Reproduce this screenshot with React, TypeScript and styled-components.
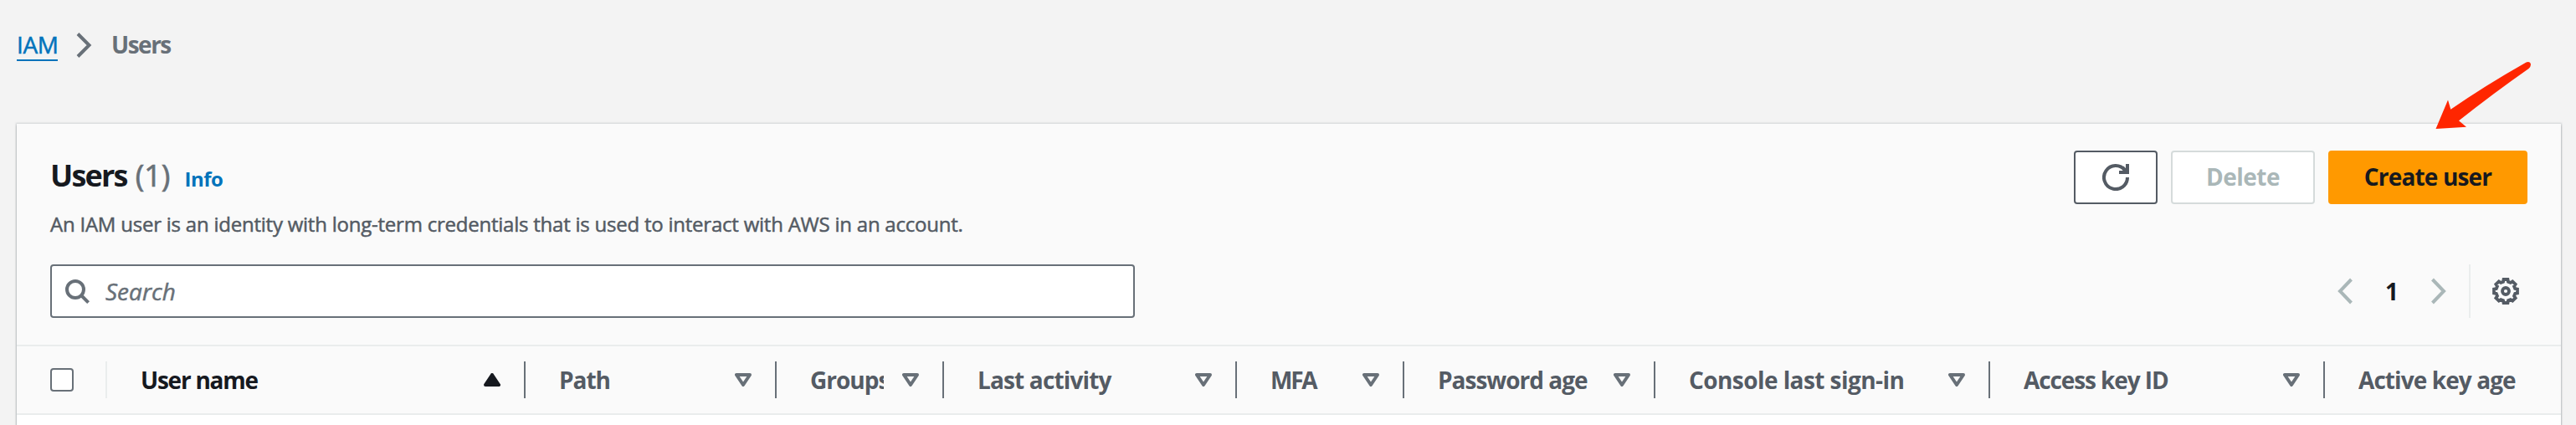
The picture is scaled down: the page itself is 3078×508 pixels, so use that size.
import React from "react";
import styled, { createGlobalStyle } from "styled-components";

const color = {
  page: "#f3f3f3",
  panel: "#fafafa",
  line: "#eaeded",
  ink: "#16191f",
  label: "#545b64",
  muted: "#687078",
  disabled: "#aab7b8",
  disabledLine: "#d5dbdb",
  link: "#0073bb",
  accent: "#ff9900",
};

const GlobalStyle = createGlobalStyle`
  *, *::before, *::after { box-sizing: border-box; }
  body {
    margin: 0;
    background: ${color.page};
    color: ${color.ink};
    font: 400 28px/36px "Open Sans", "Noto Sans", sans-serif;
    overflow: hidden;
  }
  button, input { font: inherit; color: inherit; margin: 0; }
`;

const Page = styled.div`
  position: relative;
  display: flex;
  flex-direction: column;
  height: 508px;
  padding: 0 18px 0 20px;
  overflow: hidden;
`;

const Breadcrumbs = styled.nav`
  display: flex;
  align-items: flex-start;
  flex: 0 0 148px;
  padding-top: 35px;
`;

const CrumbLink = styled.a`
  width: 49px;
  height: 38px;
  border-bottom: 2px solid ${color.link};
  color: ${color.link};
  letter-spacing: -0.4px;
  -webkit-text-stroke: 0.5px;
  white-space: nowrap;
`;

const CrumbSeparator = styled.svg`
  flex: none;
  width: 32px;
  height: 32px;
  margin: 3px 17px 0 15px;
`;

const CrumbCurrent = styled.span`
  color: ${color.muted};
  font-weight: 700;
  letter-spacing: -1.5px;
`;

const Panel = styled.section`
  display: flex;
  flex-direction: column;
  flex: 1;
  width: 3040px;
  background: #fff;
  box-shadow: 0 2px 2px 0 rgba(0, 28, 36, 0.3), 0 0 2px 1px rgba(0, 28, 36, 0.15);
`;

const PanelHeader = styled.header`
  display: flex;
  flex-direction: column;
  flex: none;
  height: 264px;
  padding: 32px 40px 0;
  background: ${color.panel};
`;

const TitleRow = styled.div`
  display: flex;
  justify-content: space-between;
  height: 136px;
`;

const TitleBlock = styled.div`
  padding-top: 8px;
`;

const Heading = styled.div`
  display: flex;
  align-items: baseline;
  height: 44px;
  line-height: 44px;
`;

const Title = styled.h1`
  margin: 0;
  font-size: 36px;
  font-weight: 700;
  letter-spacing: -1.8px;
`;

const Counter = styled.span`
  margin-left: 10px;
  color: ${color.muted};
  font-size: 36px;
  -webkit-text-stroke: 0.7px;
`;

const InfoLink = styled.a`
  margin-left: 17px;
  color: ${color.link};
  font-size: 24px;
  font-weight: 700;
  letter-spacing: -0.5px;
`;

const Description = styled.p`
  margin: 16px 0 0;
  color: ${color.label};
  font-size: 24px;
  line-height: 40px;
  letter-spacing: -0.23px;
  -webkit-text-stroke: 0.5px;
  white-space: nowrap;
`;

const Actions = styled.div`
  display: flex;
  gap: 16px;
`;

type Variant = "normal" | "disabled" | "primary";

const variants: Record<Variant, { fg: string; bg: string; line: string }> = {
  normal: { fg: color.label, bg: "#fff", line: color.label },
  disabled: { fg: color.disabled, bg: "#fff", line: color.disabledLine },
  primary: { fg: color.ink, bg: color.accent, line: color.accent },
};

const Button = styled.button<{ $variant: Variant; $width: number; $track?: number }>`
  display: flex;
  align-items: center;
  justify-content: center;
  width: ${(p) => p.$width}px;
  height: 64px;
  padding: 0 0 2px;
  border: 2px solid ${(p) => variants[p.$variant].line};
  border-radius: 4px;
  background: ${(p) => variants[p.$variant].bg};
  color: ${(p) => variants[p.$variant].fg};
  font-weight: 700;
  letter-spacing: ${(p) => p.$track ?? 0}px;
  white-space: nowrap;
`;

const ButtonIcon = styled.svg`
  width: 32px;
  height: 32px;
  margin-top: 2px;
`;

const Toolbar = styled.div`
  display: flex;
  justify-content: space-between;
  height: 64px;
`;

const SearchBox = styled.label`
  display: flex;
  align-items: center;
  width: 1296px;
  height: 64px;
  padding: 0 14px;
  border: 2px solid ${color.muted};
  border-radius: 4px;
  background: #fff;
`;

const SearchIcon = styled.svg`
  flex: none;
  width: 32px;
  height: 32px;
`;

const SearchInput = styled.input`
  flex: 1;
  height: 40px;
  padding: 0;
  margin-left: 18px;
  border: 0;
  outline: 0;
  background: transparent;
  &::placeholder {
    color: ${color.muted};
    font-style: italic;
    opacity: 1;
    -webkit-text-stroke: 0.5px;
  }
`;

const Pager = styled.div`
  display: flex;
  align-items: center;
  padding-right: 10px;
`;

const PagerIcon = styled.svg`
  width: 32px;
  height: 32px;
`;

const PageNumber = styled.span`
  width: 80px;
  padding-bottom: 1px;
  font-weight: 700;
  text-align: center;
`;

const PagerDivider = styled.span`
  width: 2px;
  height: 64px;
  margin: 0 26px 0 20px;
  background: ${color.line};
`;

const HeaderRow = styled.div`
  display: flex;
  flex: none;
  height: 84px;
  border-top: 2px solid ${color.line};
  border-bottom: 2px solid ${color.line};
  background: ${color.panel};
`;

const SelectCell = styled.div`
  display: flex;
  align-items: center;
  justify-content: space-between;
  width: 108px;
  padding-left: 40px;
`;

const Checkbox = styled.span`
  width: 28px;
  height: 28px;
  border: 2px solid ${color.muted};
  border-radius: 4px;
  background: #fff;
`;

const Cell = styled.div<{ $width: number }>`
  display: flex;
  align-items: center;
  flex: none;
  width: ${(p) => p.$width}px;
  padding-left: 40px;
`;

const CellLabel = styled.span<{ $active?: boolean; $track: number }>`
  flex: 1;
  min-width: 0;
  margin-right: 22px;
  padding-bottom: 1px;
  overflow: hidden;
  color: ${(p) => (p.$active ? color.ink : color.label)};
  font-weight: 700;
  letter-spacing: ${(p) => p.$track}px;
  white-space: nowrap;
`;

const SortIcon = styled.svg`
  flex: none;
  width: 20px;
  height: 16px;
  margin-right: 28px;
`;

const CellDivider = styled.span<{ $strong?: boolean }>`
  flex: none;
  width: 2px;
  height: 44px;
  background: ${(p) => (p.$strong ? color.muted : color.line)};
`;

const Pointer = styled.svg`
  position: absolute;
  left: 2900px;
  top: 66px;
  width: 132px;
  height: 96px;
`;

const columns = [
  { label: "User name", width: 500, track: -1.24, sorted: true },
  { label: "Path", width: 300, track: -1.05 },
  { label: "Groups", width: 200, track: -1 },
  { label: "Last activity", width: 350, track: -0.85 },
  { label: "MFA", width: 200, track: -2.2 },
  { label: "Password age", width: 300, track: -1.01 },
  { label: "Console last sign-in", width: 400, track: -0.57 },
  { label: "Access key ID", width: 400, track: -1.1 },
  { label: "Active key age", width: 282, track: -0.92, last: true },
];

// Outline of an eight-toothed cog centred in a 32px box.
const cogPath = (() => {
  const points: string[] = [];
  for (let tooth = 0; tooth < 8; tooth++) {
    for (const [offset, radius] of [[-15, 11.6], [-10, 14.2], [10, 14.2], [15, 11.6]]) {
      const a = ((tooth * 45 + offset) * Math.PI) / 180;
      points.push(`${(16 + radius * Math.cos(a)).toFixed(2)} ${(16 + radius * Math.sin(a)).toFixed(2)}`);
    }
  }
  return `M${points.join("L")}Z`;
})();

export default function App() {
  return (
    <Page>
      <GlobalStyle />
      <Breadcrumbs>
        <CrumbLink>IAM</CrumbLink>
        <CrumbSeparator viewBox="0 0 32 32" fill="none" stroke={color.muted} strokeWidth="4">
          <path d="M9 2.5 22.5 16 9 29.5" />
        </CrumbSeparator>
        <CrumbCurrent>Users</CrumbCurrent>
      </Breadcrumbs>

      <Panel>
        <PanelHeader>
          <TitleRow>
            <TitleBlock>
              <Heading>
                <Title>Users</Title>
                <Counter>(1)</Counter>
                <InfoLink>Info</InfoLink>
              </Heading>
              <Description>
                An IAM user is an identity with long-term credentials that is used to interact with AWS in an account.
              </Description>
            </TitleBlock>
            <Actions>
              <Button $variant="normal" $width={100} aria-label="Refresh">
                <ButtonIcon viewBox="0 0 32 32" fill="none" stroke={color.label} strokeWidth="4">
                  <path d="M30 16A14 14 0 1 1 27 7.4" />
                  <path d="M30 0v10H20" />
                  <path d="M24 4l6 6" />
                </ButtonIcon>
              </Button>
              <Button $variant="disabled" $width={172} $track={-0.5}>Delete</Button>
              <Button $variant="primary" $width={238} $track={-0.83}>Create user</Button>
            </Actions>
          </TitleRow>
          <Toolbar>
            <SearchBox>
              <SearchIcon viewBox="0 0 32 32" fill="none" stroke={color.muted} strokeWidth="4">
                <circle cx="14" cy="14" r="10" />
                <path d="M21 21l8.6 8.6" />
              </SearchIcon>
              <SearchInput placeholder="Search" />
            </SearchBox>
            <Pager>
              <PagerIcon viewBox="0 0 32 32" fill="none" stroke={color.disabled} strokeWidth="4">
                <path d="M23.5 2 10 16l13.5 14" />
              </PagerIcon>
              <PageNumber>1</PageNumber>
              <PagerIcon viewBox="0 0 32 32" fill="none" stroke={color.disabled} strokeWidth="4">
                <path d="M8.5 2 22 16 8.5 30" />
              </PagerIcon>
              <PagerDivider />
              <PagerIcon viewBox="0 0 32 32" fill="none" stroke={color.label} strokeWidth="3.8">
                <path d={cogPath} />
                <circle cx="16" cy="16" r="4" />
              </PagerIcon>
            </Pager>
          </Toolbar>
        </PanelHeader>

        <HeaderRow>
          <SelectCell>
            <Checkbox />
            <CellDivider />
          </SelectCell>
          {columns.map((c) => (
            <Cell key={c.label} $width={c.width}>
              <CellLabel $active={c.sorted} $track={c.track}>{c.label}</CellLabel>
              {!c.last && (
                <>
                  <SortIcon viewBox="0 0 20 16" strokeWidth="4" strokeLinejoin="round">
                    {c.sorted ? (
                      <path d="M10 2 18 14H2Z" fill={color.ink} stroke={color.ink} />
                    ) : (
                      <path d="M2 2h16l-8 12Z" fill="none" stroke={color.muted} />
                    )}
                  </SortIcon>
                  <CellDivider $strong />
                </>
              )}
            </Cell>
          ))}
        </HeaderRow>
      </Panel>

      <Pointer viewBox="2900 66 132 96">
        <path
          d="M2910.5 154 2925 119.5 2928.3 130.8Q2968 103 3018.5 74.4Q3023.5 73 3024 77.3Q3024 79.5 3021.5 82Q2980 111 2938 144.3L2947 151.8Z"
          fill="#ff2600"
        />
      </Pointer>
    </Page>
  );
}
